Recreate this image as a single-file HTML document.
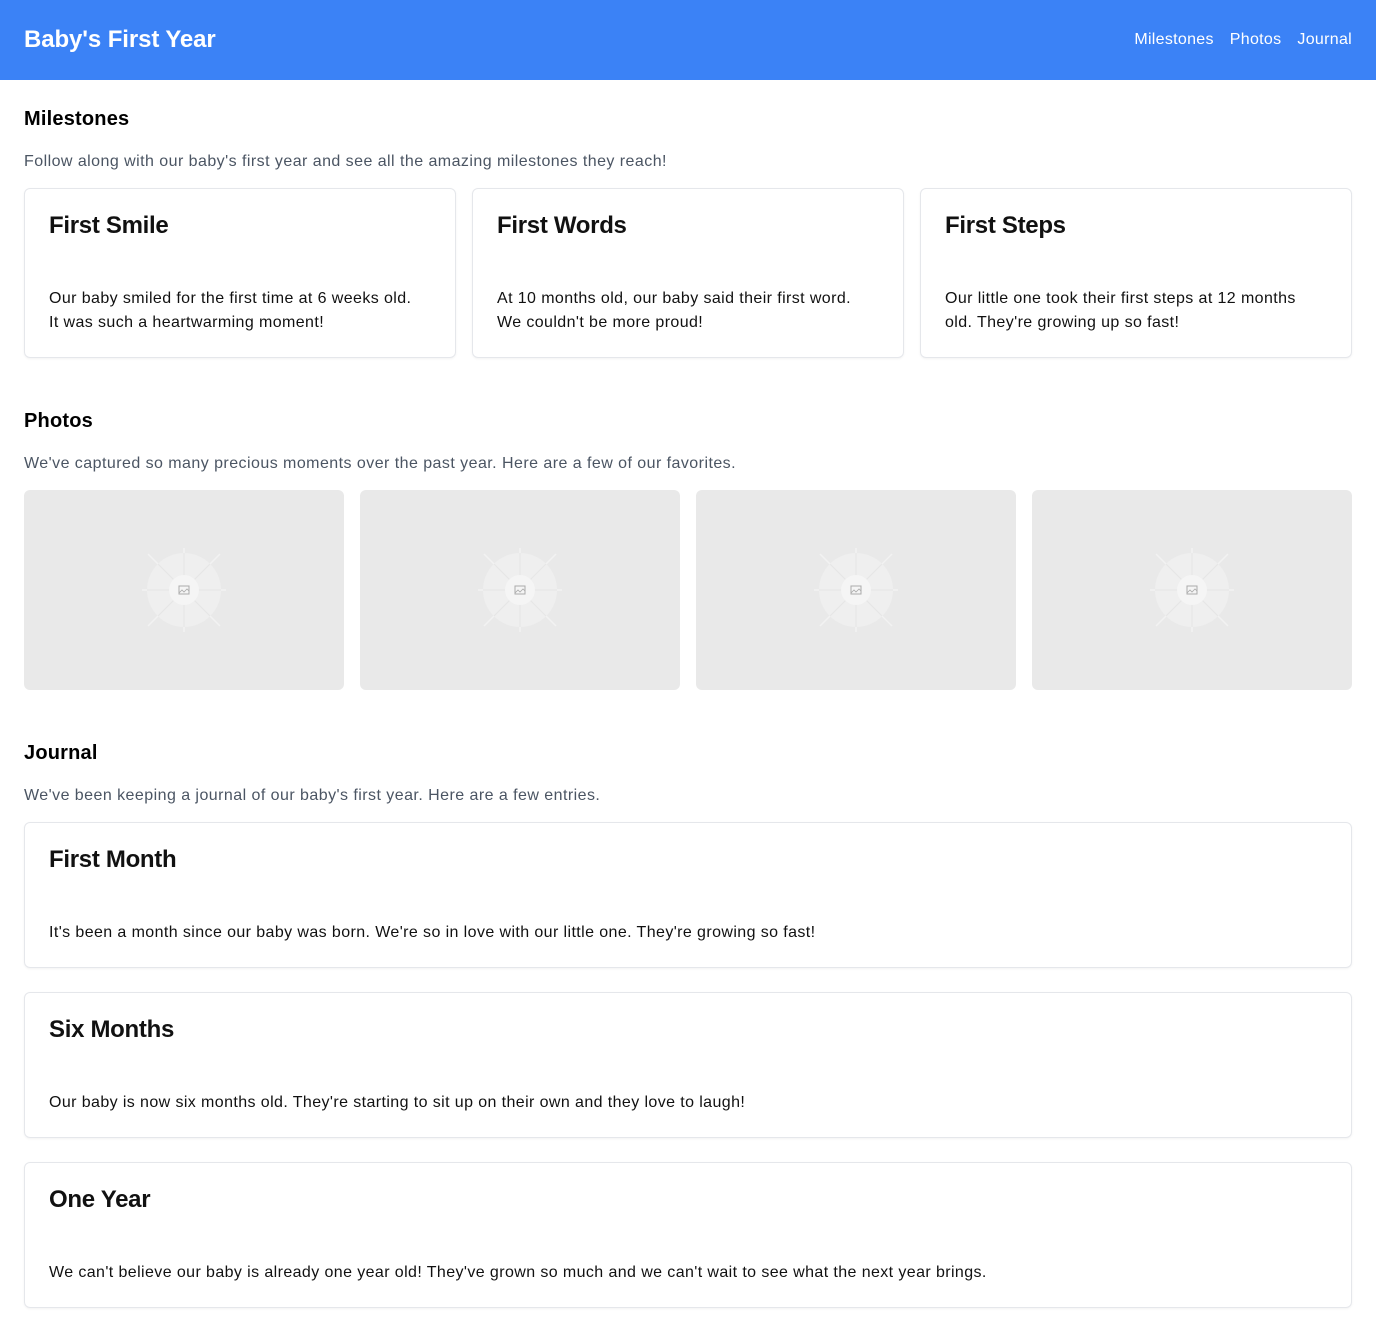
<!DOCTYPE html>
<html><head><meta charset="utf-8"><style>
*{box-sizing:border-box;margin:0;padding:0}
body{font-family:"Liberation Sans",sans-serif;background:#fff;color:#111;width:1376px}
header{background:#3b82f6;height:80px;display:flex;align-items:center;justify-content:space-between;padding:0 24px}
header h1{color:#fff;font-size:24px;font-weight:bold;letter-spacing:-0.1px}
nav a{color:#fff;font-size:16px;margin-left:16px;text-decoration:none;letter-spacing:0.3px}
main{padding:0 24px}
h2{font-size:20px;font-weight:bold;color:#000;margin-top:27px;line-height:24px;letter-spacing:0.2px}
.sub{color:#4b5563;font-size:16px;margin-top:21px;line-height:20px;letter-spacing:0.45px}
.grid3{display:grid;grid-template-columns:repeat(3,1fr);gap:16px;margin-top:16px}
.card{border:1px solid #e5e7eb;border-radius:6px;padding:23px 24px 22px;box-shadow:0 1px 2px rgba(0,0,0,.05)}
.card h3{font-size:24px;font-weight:bold;color:#111;line-height:28px;letter-spacing:-0.3px}
.card p{font-size:16px;line-height:24px;margin-top:47px;color:#111;letter-spacing:0.4px}
.grid4{display:grid;grid-template-columns:repeat(4,1fr);gap:16px;margin-top:16px}
.ph{height:200px;background:#e9e9e9;border-radius:6px;position:relative;overflow:hidden}
.ph svg{position:absolute;left:50%;top:50%;margin:-50px 0 0 -50px}
.j{margin-top:16px}
.j .card{margin-bottom:24px}
</style></head><body>
<header><h1>Baby's First Year</h1><nav><a>Milestones</a><a>Photos</a><a>Journal</a></nav></header>
<main>
<h2>Milestones</h2>
<p class="sub">Follow along with our baby's first year and see all the amazing milestones they reach!</p>
<div class="grid3">
<div class="card"><h3>First Smile</h3><p>Our baby smiled for the first time at 6 weeks old.<br>It was such a heartwarming moment!</p></div>
<div class="card"><h3>First Words</h3><p>At 10 months old, our baby said their first word. We couldn't be more proud!</p></div>
<div class="card"><h3>First Steps</h3><p>Our little one took their first steps at 12 months old. They're growing up so fast!</p></div>
</div>
<h2 style="margin-top:51px">Photos</h2>
<p class="sub">We've captured so many precious moments over the past year. Here are a few of our favorites.</p>
<div class="grid4">
<div class="ph"><svg width="100" height="100" viewBox="0 0 100 100"><g stroke="#f2f2f2" stroke-width="1.5"><line x1="50" y1="8" x2="50" y2="92"/><line x1="8" y1="50" x2="92" y2="50"/><line x1="14" y1="14" x2="86" y2="86"/><line x1="86" y1="14" x2="14" y2="86"/></g><circle cx="50" cy="50" r="37" fill="#efefef"/><g stroke="#e6e6e6" stroke-width="1"><line x1="50" y1="13" x2="50" y2="87"/><line x1="13" y1="50" x2="87" y2="50"/><line x1="24" y1="24" x2="76" y2="76"/><line x1="76" y1="24" x2="24" y2="76"/></g><circle cx="50" cy="50" r="15" fill="#f5f5f5"/><rect x="45" y="46" width="10" height="8" fill="none" stroke="#aaa"/><path d="M45 53l3-3 2 2 3-3 2 2" fill="none" stroke="#aaa" stroke-width=".8"/></svg></div>
<div class="ph"><svg width="100" height="100" viewBox="0 0 100 100"><g stroke="#f2f2f2" stroke-width="1.5"><line x1="50" y1="8" x2="50" y2="92"/><line x1="8" y1="50" x2="92" y2="50"/><line x1="14" y1="14" x2="86" y2="86"/><line x1="86" y1="14" x2="14" y2="86"/></g><circle cx="50" cy="50" r="37" fill="#efefef"/><g stroke="#e6e6e6" stroke-width="1"><line x1="50" y1="13" x2="50" y2="87"/><line x1="13" y1="50" x2="87" y2="50"/><line x1="24" y1="24" x2="76" y2="76"/><line x1="76" y1="24" x2="24" y2="76"/></g><circle cx="50" cy="50" r="15" fill="#f5f5f5"/><rect x="45" y="46" width="10" height="8" fill="none" stroke="#aaa"/><path d="M45 53l3-3 2 2 3-3 2 2" fill="none" stroke="#aaa" stroke-width=".8"/></svg></div>
<div class="ph"><svg width="100" height="100" viewBox="0 0 100 100"><g stroke="#f2f2f2" stroke-width="1.5"><line x1="50" y1="8" x2="50" y2="92"/><line x1="8" y1="50" x2="92" y2="50"/><line x1="14" y1="14" x2="86" y2="86"/><line x1="86" y1="14" x2="14" y2="86"/></g><circle cx="50" cy="50" r="37" fill="#efefef"/><g stroke="#e6e6e6" stroke-width="1"><line x1="50" y1="13" x2="50" y2="87"/><line x1="13" y1="50" x2="87" y2="50"/><line x1="24" y1="24" x2="76" y2="76"/><line x1="76" y1="24" x2="24" y2="76"/></g><circle cx="50" cy="50" r="15" fill="#f5f5f5"/><rect x="45" y="46" width="10" height="8" fill="none" stroke="#aaa"/><path d="M45 53l3-3 2 2 3-3 2 2" fill="none" stroke="#aaa" stroke-width=".8"/></svg></div>
<div class="ph"><svg width="100" height="100" viewBox="0 0 100 100"><g stroke="#f2f2f2" stroke-width="1.5"><line x1="50" y1="8" x2="50" y2="92"/><line x1="8" y1="50" x2="92" y2="50"/><line x1="14" y1="14" x2="86" y2="86"/><line x1="86" y1="14" x2="14" y2="86"/></g><circle cx="50" cy="50" r="37" fill="#efefef"/><g stroke="#e6e6e6" stroke-width="1"><line x1="50" y1="13" x2="50" y2="87"/><line x1="13" y1="50" x2="87" y2="50"/><line x1="24" y1="24" x2="76" y2="76"/><line x1="76" y1="24" x2="24" y2="76"/></g><circle cx="50" cy="50" r="15" fill="#f5f5f5"/><rect x="45" y="46" width="10" height="8" fill="none" stroke="#aaa"/><path d="M45 53l3-3 2 2 3-3 2 2" fill="none" stroke="#aaa" stroke-width=".8"/></svg></div>
</div>
<h2 style="margin-top:51px">Journal</h2>
<p class="sub">We've been keeping a journal of our baby's first year. Here are a few entries.</p>
<div class="j">
<div class="card"><h3>First Month</h3><p>It's been a month since our baby was born. We're so in love with our little one. They're growing so fast!</p></div>
<div class="card"><h3>Six Months</h3><p>Our baby is now six months old. They're starting to sit up on their own and they love to laugh!</p></div>
<div class="card"><h3>One Year</h3><p>We can't believe our baby is already one year old! They've grown so much and we can't wait to see what the next year brings.</p></div>
</div>
</main>
</body></html>
